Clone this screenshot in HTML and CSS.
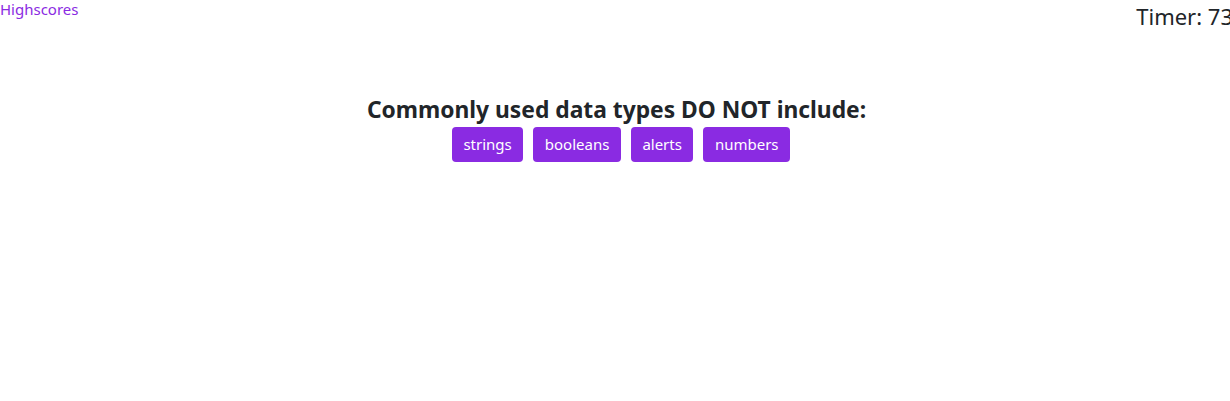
FILE: index.html
```html
<!DOCTYPE html>
<html>
<head>
<meta charset="utf-8">
<link rel="stylesheet" href="styles.css">
</head>
<body>
<header class="top">
  <a class="link" href="#">Highscores</a>
  <div class="timer">Timer: 73</div>
</header>
<main class="quiz">
  <h2 class="question">Commonly used data types DO NOT include:</h2>
  <div class="choices">
    <button class="choice">strings</button>
    <button class="choice">booleans</button>
    <button class="choice">alerts</button>
    <button class="choice">numbers</button>
  </div>
</main>
</body>
</html>
```
FILE: styles.css
```css
html, body {
  margin: 0;
  padding: 0;
  background: #fff;
  font-family: "Noto Sans", "Open Sans", sans-serif;
  color: #212529;
  overflow: hidden;
}
.top {
  display: flex;
  justify-content: space-between;
  align-items: flex-start;
  width: 1233px;
}
.link {
  color: #8a2be2;
  text-decoration: none;
  font-size: 15px;
  line-height: 19px;
}
.timer {
  font-size: 22px;
  line-height: 26px;
  margin-top: 3px;
}
.quiz {
  display: flex;
  flex-direction: column;
  align-items: center;
  margin-top: 66px;
}
.question {
  margin: 0;
  padding-left: 3px;
  font-size: 22.8px;
  line-height: 30px;
  font-weight: 700;
}
.choices {
  display: flex;
  gap: 10px;
  margin-top: 2px;
  padding-left: 12px;
}
.choice {
  background: #8a2be2;
  color: #fff;
  border: none;
  border-radius: 4px;
  font-family: inherit;
  font-size: 15px;
  line-height: 21px;
  padding: 7px 11.5px;
}
```
